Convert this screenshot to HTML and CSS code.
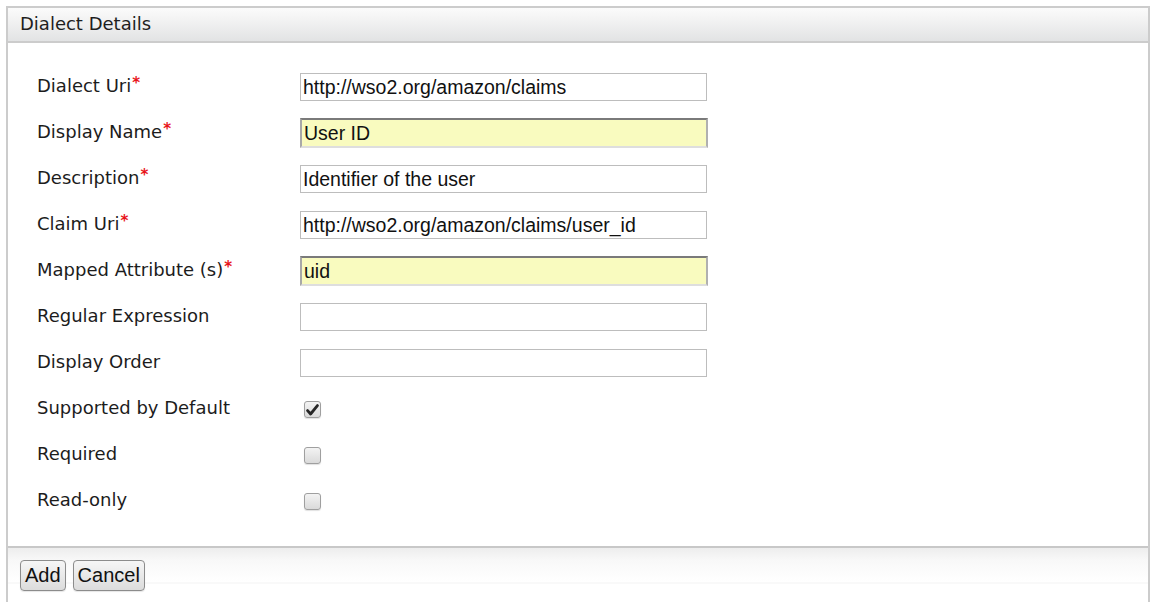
FILE: index.html
```html
<!DOCTYPE html>
<html>
<head>
<meta charset="utf-8">
<link rel="stylesheet" href="styles.css">
</head>
<body>
<div class="panel">
  <div class="panel-head">Dialect Details</div>
  <div class="panel-body">
    <div class="form">
      <div class="lbl">Dialect Uri<span class="req">*</span></div>
      <div class="fld"><input class="txt" type="text" value="http://wso2.org/amazon/claims"></div>

      <div class="lbl">Display Name<span class="req">*</span></div>
      <div class="fld"><input class="txt hl" type="text" value="User ID"></div>

      <div class="lbl">Description<span class="req">*</span></div>
      <div class="fld"><input class="txt" type="text" value="Identifier of the user"></div>

      <div class="lbl">Claim Uri<span class="req">*</span></div>
      <div class="fld"><input class="txt" type="text" value="http://wso2.org/amazon/claims/user_id"></div>

      <div class="lbl">Mapped Attribute (s)<span class="req">*</span></div>
      <div class="fld"><input class="txt hl" type="text" value="uid"></div>

      <div class="lbl">Regular Expression</div>
      <div class="fld"><input class="txt" type="text" value=""></div>

      <div class="lbl">Display Order</div>
      <div class="fld"><input class="txt" type="text" value=""></div>

      <div class="lbl">Supported by Default</div>
      <div class="fld"><span class="chk"><svg width="13" height="12" viewBox="0 0 13 12"><path d="M1.6 6.6 L4.6 10 L11.4 1.6" fill="none" stroke="#262626" stroke-width="2.8" stroke-linejoin="round" stroke-linecap="round"/></svg></span></div>

      <div class="lbl">Required</div>
      <div class="fld"><span class="chk"></span></div>

      <div class="lbl">Read-only</div>
      <div class="fld"><span class="chk"></span></div>
    </div>
  </div>
  <div class="panel-foot">
    <button class="btn">Add</button>
    <button class="btn">Cancel</button>
  </div>
</div>
</body>
</html>
```
FILE: styles.css
```css
html, body {
  margin: 0;
  padding: 0;
  background: #fff;
}
body {
  padding: 6px 0 0 6px;
  font-family: "DejaVu Sans", "Liberation Sans", sans-serif;
  color: #1a1a1a;
}
.panel {
  width: 1140px;
  height: 596px;
  border: 2px solid #cccccc;
  border-bottom: none;
  overflow: hidden;
}
.panel-head {
  height: 33px;
  border-bottom: 2px solid #cccccc;
  background: linear-gradient(to bottom, #fbfbfb 0%, #f4f4f4 30%, #e2e3e4 100%);
  font-size: 18px;
  line-height: 31px;
  padding-left: 12px;
  color: #1e1e1e;
}
.panel-body {
  height: 505px;
  box-sizing: border-box;
  padding: 21px 0 0 29px;
  border-bottom: 2px solid #c8c8c8;
}
.form {
  display: grid;
  grid-template-columns: 263px 410px;
  grid-auto-rows: 46px;
  align-items: center;
}
.lbl {
  font-size: 18px;
  color: #1c1c1c;
  position: relative;
  top: -2px;
}
.req {
  color: #e8141a;
  font-size: 15px;
  font-weight: bold;
  position: relative;
  top: -4px;
  margin-left: 1px;
}
.fld {
  display: flex;
  align-items: center;
}
.txt {
  box-sizing: border-box;
  width: 407px;
  height: 28px;
  margin: 0;
  border: 1px solid #bdbdbd;
  background: #fff;
  font-family: "Liberation Sans", Arial, sans-serif;
  font-size: 19.5px;
  color: #111;
  padding: 0 2px;
  outline: none;
}
.txt.hl {
  height: 30px;
  width: 408px;
  border-width: 2px;
  border-style: solid;
  border-color: #7a7a7a #b0b0b0 #dedede #a8a8a8;
  background: #f9fbbf;
  padding: 1px 2px 0 2px;
}
.chk {
  display: flex;
  align-items: center;
  justify-content: center;
  width: 15px;
  height: 15px;
  margin-left: 4px;
  margin-top: 1px;
  border: 1px solid #9f9f9f;
  border-radius: 3px;
  background: linear-gradient(to bottom, #f3f3f3, #dadada);
  box-shadow: 0 1px 1px rgba(0,0,0,0.12);
}
.chk svg {
  display: block;
  margin-top: 1px;
}
.panel-foot {
  display: flex;
  align-items: flex-start;
  gap: 7px;
  padding: 12px 0 0 12px;
  height: 42px;
  background: linear-gradient(to bottom, #ededed 0px, #f8f8f8 12px, #fefefe 30px, #ffffff 34px, #f3f3f3 35px, #ffffff 36px);
}
.btn {
  box-sizing: border-box;
  height: 31px;
  margin: 0;
  padding: 0 4px 1px 4px;
  border: 1px solid #8c8c8c;
  border-radius: 4px;
  background: linear-gradient(to bottom, #f6f6f6, #dcdcdc);
  font-family: "Liberation Sans", Arial, sans-serif;
  font-size: 20px;
  color: #111;
  box-shadow: 0 1px 1px rgba(0,0,0,0.1);
}
```
